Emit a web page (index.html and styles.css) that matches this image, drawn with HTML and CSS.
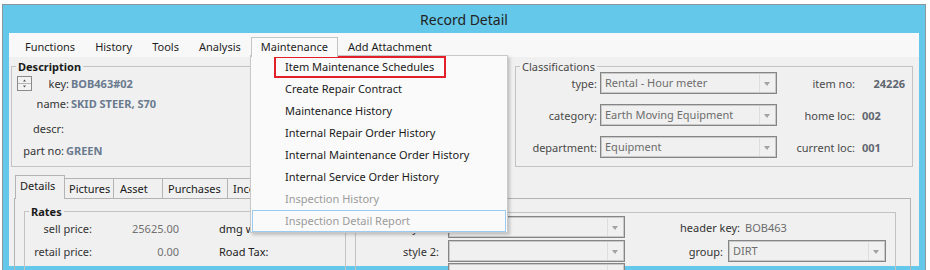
FILE: index.html
```html
<!DOCTYPE html>
<html>
<head>
  <meta charset="utf-8">
  <title>Record Detail</title>
  <link rel="stylesheet" href="styles.css">
</head>
<body>
  <div class="janela">
    <div class="titulo">Record Detail</div>

    <div class="menu">
      <span class="menu-item">Functions</span>
      <span class="menu-item">History</span>
      <span class="menu-item">Tools</span>
      <span class="menu-item">Analysis</span>
      <span class="menu-item aberto">Maintenance</span>
      <span class="menu-item">Add Attachment</span>
    </div>

    <div class="conteudo">
      <div class="topo">
        <fieldset class="grupo descricao">
          <legend>Description</legend>
          <div class="d-linha">
            <svg class="spin" width="15" height="15" viewBox="0 0 15 15">
              <rect x="0.5" y="0.5" width="14" height="14" fill="#f2f2f2" stroke="#8a8a8a"/>
              <line x1="1" y1="7.5" x2="14" y2="7.5" stroke="#b4b4b4"/>
              <path d="M7.5 3.5 L9 5.5 H6Z" fill="#555"/>
              <path d="M7.5 11.5 L9 9.5 H6Z" fill="#555"/>
            </svg>
            <span class="d-rot curto">key:</span><span class="d-val">BOB463#02</span>
          </div>
          <div class="d-linha l2">
            <span class="d-rot">name:</span><span class="d-val">SKID STEER, S70</span>
          </div>
          <div class="d-linha l3">
            <span class="d-rot estreito">descr:</span><span class="d-val"></span>
          </div>
          <div class="d-linha l4">
            <span class="d-rot estreito">part no:</span><span class="d-val">GREEN</span>
          </div>
        </fieldset>

        <fieldset class="grupo classif">
          <legend>Classifications</legend>
          <div class="c-grade">
            <span class="c-rot">type:</span>
            <div class="combo"><span>Rental - Hour meter</span><i class="seta"></i></div>
            <span class="c-rot2">item no:</span>
            <span class="c-val direita">24226</span>

            <span class="c-rot">category:</span>
            <div class="combo"><span>Earth Moving Equipment</span><i class="seta"></i></div>
            <span class="c-rot2">home loc:</span>
            <span class="c-val">002</span>

            <span class="c-rot">department:</span>
            <div class="combo"><span>Equipment</span><i class="seta"></i></div>
            <span class="c-rot2">current loc:</span>
            <span class="c-val">001</span>
          </div>
        </fieldset>
      </div>

      <div class="abas">
        <span class="aba ativa">Details</span>
        <span class="aba">Pictures</span>
        <span class="aba asset">Asset</span>
        <span class="aba purchases">Purchases</span>
        <span class="aba inc">Income</span>
      </div>

      <div class="pagina">
        <fieldset class="grupo taxas">
          <legend>Rates</legend>
          <div class="t-linha">
            <span class="t-rot">sell price:</span><span class="t-val">25625.00</span><span class="t-extra">dmg waiver:</span>
          </div>
          <div class="t-linha l2">
            <span class="t-rot">retail price:</span><span class="t-val">0.00</span><span class="t-extra">Road Tax:</span>
          </div>
        </fieldset>

        <fieldset class="grupo estilos">
          <div class="s-linha">
            <span class="s-rot">style 1:</span>
            <div class="combo"><span></span><i class="seta"></i></div>
            <span class="s-rot2 chave">header key:</span><span class="s-val">BOB463</span>
          </div>
          <div class="s-linha">
            <span class="s-rot">style 2:</span>
            <div class="combo"><span></span><i class="seta"></i></div>
            <span class="s-rot2">group:</span>
            <div class="combo combo-grupo"><span>DIRT</span><i class="seta"></i></div>
          </div>
          <div class="s-linha l3">
            <span class="s-rot"></span>
            <div class="combo"><span></span><i class="seta"></i></div>
          </div>
        </fieldset>
      </div>
    </div>

    <ul class="dropdown">
      <li class="primeiro"><span class="marcado">Item Maintenance Schedules</span></li>
      <li>Create Repair Contract</li>
      <li>Maintenance History</li>
      <li>Internal Repair Order History</li>
      <li>Internal Maintenance Order History</li>
      <li>Internal Service Order History</li>
      <li class="off">Inspection History</li>
      <li class="off hover">Inspection Detail Report</li>
    </ul>
  </div>
</body>
</html>
```

FILE: styles.css
```css
* {
  box-sizing: border-box;
}

body {
  margin: 0;
  background: #fff;
  font-family: "Noto Sans", "Open Sans", sans-serif;
  font-size: 11px;
  color: #1e1e1e;
}

/* janela */
.janela {
  position: relative;
  height: 266px;
  margin: 4px 4px 0 2px;
  padding: 0 6px;
  border: 1px solid #8c969c;
  border-bottom: 0;
  background: #64c8ea;
  overflow: hidden;
}

.titulo {
  height: 28px;
  line-height: 29px;
  text-align: center;
  font-size: 14px;
  color: #222;
}

/* menu */
.menu {
  display: flex;
  align-items: flex-end;
  height: 24px;
  padding-left: 6px;
  background: #f8f8f8;
}

.menu-item {
  height: 20px;
  line-height: 18px;
  padding: 0 9px;
  border: 1px solid transparent;
  border-bottom: 0;
}

.menu-item.aberto {
  position: relative;
  z-index: 2;
  border-color: #c4c4c4;
  background: #fafafa;
}

.conteudo {
  height: 209px;
  padding: 2px 6px 0 2px;
  background: #f0f0f0;
}

/* groupbox */
fieldset.grupo {
  margin: 0;
  padding: 0;
  min-width: 0;
  border: 1px solid #c3c3c3;
}

.grupo legend {
  margin-left: 4px;
  padding: 0 2px;
  font-weight: bold;
  color: #1a1a1a;
}

.topo {
  display: flex;
  justify-content: space-between;
}

.descricao {
  width: 490px;
  height: 108px;
}

.classif {
  width: 398px;
  height: 108px;
}

.classif legend {
  font-weight: normal;
  color: #4a4a4a;
}

/* descricao */
.d-linha {
  display: flex;
  align-items: center;
  height: 18px;
}

.d-linha.l2 { margin-top: 2px; }
.d-linha.l3 { margin-top: 7px; }
.d-linha.l4 { margin-top: 4px; }

.spin {
  margin-left: 5px;
}

.d-rot {
  width: 57px;
  text-align: right;
  color: #333;
}

.d-rot.curto { width: 37px; }
.d-rot.estreito { width: 52px; }

.d-val {
  margin-left: 2px;
  font-weight: bold;
  color: #6a7a8e;
}

/* classificacoes */
.c-grade {
  display: grid;
  grid-template-columns: 81px 177px 79px 43px;
  grid-template-rows: 22px 22px 22px;
  row-gap: 10px;
  column-gap: 3px;
  align-items: center;
  margin-top: -2px;
}

.c-rot, .c-rot2 {
  text-align: right;
  color: #4a4a4a;
}

.c-rot2 {
  padding-right: 4px;
}

.c-val {
  font-weight: bold;
  color: #5f6670;
}

.c-val.direita {
  text-align: right;
}

/* combo desabilitado */
.combo {
  display: flex;
  width: 177px;
  height: 22px;
  border: 1px solid #858585;
  box-shadow: inset 0 0 0 1px #c9c9c9;
  background: #f0f0f0;
  color: #6d6d6d;
}

.combo span {
  flex: 1;
  padding-left: 4px;
  line-height: 20px;
  white-space: nowrap;
  overflow: hidden;
}

.combo .seta {
  position: relative;
  width: 16px;
  margin: 1px 1px 1px 0;
  border-left: 1px solid #dedede;
}

.combo .seta::after {
  content: "";
  position: absolute;
  left: 4px;
  top: 8px;
  border-top: 4px solid #a2a2a2;
  border-left: 3px solid transparent;
  border-right: 3px solid transparent;
}

.combo-grupo {
  width: 158px;
}

/* abas */
.abas {
  position: relative;
  z-index: 1;
  display: flex;
  align-items: flex-end;
  height: 24px;
  margin: 8px 0 -1px 4px;
}

.aba {
  width: 50px;
  height: 20px;
  margin: 0 -1px 1px 0;
  padding-left: 4px;
  line-height: 19px;
  border: 1px solid #b4b4b4;
  border-bottom: 0;
  background: #f0f0f0;
  color: #1a1a1a;
}

.aba.ativa {
  height: 24px;
  margin-bottom: 0;
  line-height: 20px;
}

.aba.asset { padding-left: 6px; }
.aba.purchases { width: 66px; padding-left: 5px; }
.aba.inc { width: 60px; padding-left: 5px; }

.pagina {
  display: flex;
  align-items: flex-start;
  height: 80px;
  margin: 0 2px 0 3px;
  padding: 0 14px 0 9px;
  border: 1px solid #b4b4b4;
  border-bottom: 0;
}

/* rates */
.taxas {
  width: 322px;
  height: 80px;
  margin-top: 5px !important;
}

.t-linha {
  display: flex;
  align-items: center;
  height: 18px;
}

.t-linha.l2 { margin-top: 5px; }

.t-rot {
  width: 67px;
  text-align: right;
  color: #333;
}

.t-val {
  width: 87px;
  text-align: right;
  color: #707070;
}

.t-extra {
  margin-left: 40px;
  color: #222;
  white-space: nowrap;
}

/* estilos */
.estilos {
  flex: 1;
  height: 80px;
  margin: 13px 0 0 9px !important;
  padding-top: 3px !important;
}

.s-linha {
  display: flex;
  align-items: center;
  height: 22px;
  margin-bottom: 2px;
}

.s-linha.l3 { margin-top: -1px; }

.s-rot {
  width: 83px;
  margin-right: 9px;
  text-align: right;
  color: #333;
}

.s-rot2 {
  width: 98px;
  margin-right: 5px;
  text-align: right;
  color: #333;
}

.s-rot2.chave {
  width: 115px;
}

.s-val {
  color: #6b6b6b;
}

/* menu aberto */
.dropdown {
  position: absolute;
  z-index: 1;
  left: 247px;
  top: 50px;
  width: 258px;
  margin: 0;
  padding: 0;
  list-style: none;
  border: 1px solid #c8c8c8;
  background: #fafafa;
  box-shadow: 2px 2px 3px rgba(0, 0, 0, .2);
}

.dropdown li {
  height: 22px;
  line-height: 22px;
  padding-left: 34px;
  color: #1a1a1a;
  white-space: nowrap;
}

.dropdown li.primeiro {
  padding-left: 23px;
}

.marcado {
  display: inline-block;
  height: 22px;
  line-height: 18px;
  padding: 0 10px 0 9px;
  border: 2px solid #e3202a;
}

.dropdown li.off {
  color: #9b9b9b;
}

.dropdown li.hover {
  margin: 0 1px;
  padding-left: 32px;
  line-height: 20px;
  border: 1px solid #9ccbf2;
}
```
